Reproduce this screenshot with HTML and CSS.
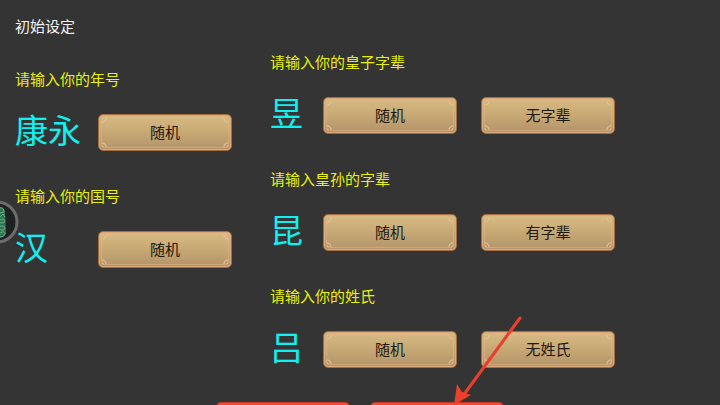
FILE: index.html
```
<!DOCTYPE html>
<html lang="zh-CN">
<head>
    <meta charset="UTF-8">
    <meta name="viewport" content="width=device-width, initial-scale=1.0">
    <title>初始设定</title>
    <link rel="stylesheet" href="styles.css">
</head>
<body>

<form class="setup">
    <div class="columns">
        <div class="column">
            <h1>初始设定</h1>
            <div class="group">
                <label for="era">请输入你的年号</label>
                <div class="row">
                    <input class="name wide" id="era" type="text" value="康永">
                    <button class="btn" type="button"><span>随机</span></button>
                </div>
            </div>
            <div class="group">
                <label for="country">请输入你的国号</label>
                <div class="row">
                    <input class="name wide" id="country" type="text" value="汉">
                    <button class="btn" type="button"><span>随机</span></button>
                </div>
            </div>
        </div>
        <div class="column column-right">
            <div class="group">
                <label for="son">请输入你的皇子字辈</label>
                <div class="row">
                    <input class="name" id="son" type="text" value="昱">
                    <button class="btn" type="button"><span>随机</span></button>
                    <button class="btn" type="button"><span>无字辈</span></button>
                </div>
            </div>
            <div class="group">
                <label for="grandson">请输入皇孙的字辈</label>
                <div class="row">
                    <input class="name" id="grandson" type="text" value="昆">
                    <button class="btn" type="button"><span>随机</span></button>
                    <button class="btn" type="button"><span>有字辈</span></button>
                </div>
            </div>
            <div class="group">
                <label for="surname">请输入你的姓氏</label>
                <div class="row">
                    <input class="name" id="surname" type="text" value="吕">
                    <button class="btn" type="button"><span>随机</span></button>
                    <button class="btn" type="button"><span>无姓氏</span></button>
                </div>
            </div>
        </div>
    </div>
    <div class="actions">
        <button class="btn btn-red" type="button"></button>
        <button class="btn btn-red" type="button"></button>
    </div>
</form>

<!-- floating assist ball, half off the left edge -->
<svg class="ball" width="20" height="46" viewBox="0 0 20 46" aria-hidden="true">
    <circle cx="-3" cy="23" r="20" fill="#202221" stroke="#6c6c6c" stroke-width="3"/>
    <path d="M0 8 Q4 8 5 13 L6 34 Q5 38 0 39 Z" fill="#2f7350"/>
    <g fill="none" stroke="#62ad83" stroke-width="1">
        <path d="M0 9 Q4 8 4 13 L0 14 M0 18 L3 15 L5 18"/>
        <ellipse cx="2" cy="22" rx="3" ry="2"/>
        <ellipse cx="2" cy="29" rx="3" ry="2"/>
        <path d="M0 34 Q5 31 5 35 Q4 38 0 38"/>
    </g>
</svg>

<!-- arrow pointing at the second action -->
<svg class="arrow" width="72" height="92" viewBox="0 0 72 92" aria-hidden="true">
    <path d="M67 5 L12 80" fill="none" stroke="#e8402c" stroke-width="3" stroke-linecap="round"/>
    <path d="M1 92 L4 71 L9 79 L18 82 Z" fill="#e8402c"/>
</svg>

</body>
</html>
```

FILE: styles.css
```
* {
    box-sizing: border-box;
}
body {
    position: relative;
    height: 100vh;
    margin: 0;
    overflow: hidden;
    background-color: #343434;
    color: #f2f2f2;
    font-family: "Noto Sans CJK SC", "Noto Sans", sans-serif;
    font-size: 15px;
    line-height: 20px;
}
.setup {
    padding: 16px 15px 0;
}
.columns {
    display: grid;
    grid-template-columns: 255px 1fr;
}
.column {
    display: flex;
    flex-direction: column;
    gap: 35px;
}
.column-right {
    padding-top: 36px;
}
h1 {
    margin: 0 0 -2px;
    font-size: 15px;
    font-weight: 400;
}
label {
    display: block;
    margin-bottom: 25px;
    color: #e9f010;
}
.row {
    display: flex;
    height: 37px;
}
.name {
    width: 53px;
    padding: 0 0 8px;
    border: 0;
    outline: 0;
    background: transparent;
    color: #10f0f0;
    font: inherit;
    font-size: 33px;
    line-height: 36px;
}
.wide {
    width: 83px;
}

/* Buttons */
.btn {
    position: relative;
    width: 134px;
    height: 37px;
    padding: 0 0 2px;
    border: 1px solid #a86d3e;
    border-radius: 5px;
    background: linear-gradient(#d8bb83, #c6a874 50%, #b3936a);
    box-shadow: inset 0 0 0 1px #dba877;
    color: #21180f;
    font: inherit;
    cursor: pointer;
}
.btn + .btn {
    margin-left: 24px;
}
/* light ornaments in the four corners */
.btn::before {
    content: "";
    position: absolute;
    inset: 2px;
    border: 1px solid rgba(226, 184, 138, 0.5);
    border-radius: 4px;
    background:
        radial-gradient(circle at 0 0, transparent 3px, #e2c595 4px, transparent 5px) 0 0 / 7px 7px no-repeat,
        radial-gradient(circle at 100% 0, transparent 3px, #e2c595 4px, transparent 5px) 100% 0 / 7px 7px no-repeat,
        radial-gradient(circle at 0 100%, #e8c3a0 1px, transparent 2px, transparent 3px, #e8c3a0 4px, transparent 5px) 0 100% / 7px 7px no-repeat,
        radial-gradient(circle at 100% 100%, #e8c3a0 1px, transparent 2px, transparent 3px, #e8c3a0 4px, transparent 5px) 100% 100% / 7px 7px no-repeat;
}
.actions {
    display: flex;
    justify-content: center;
    margin-top: 34px;
}
.btn-red {
    border-color: #c93a26;
    background: #e8513a;
    box-shadow: inset 0 0 0 2px #ee4b33;
}
.actions .btn + .btn {
    margin-left: 20px;
}

/* Overlays */
.ball {
    position: absolute;
    top: 199px;
    left: 0;
}
.arrow {
    position: absolute;
    top: 313px;
    left: 453px;
    pointer-events: none;
}
```
